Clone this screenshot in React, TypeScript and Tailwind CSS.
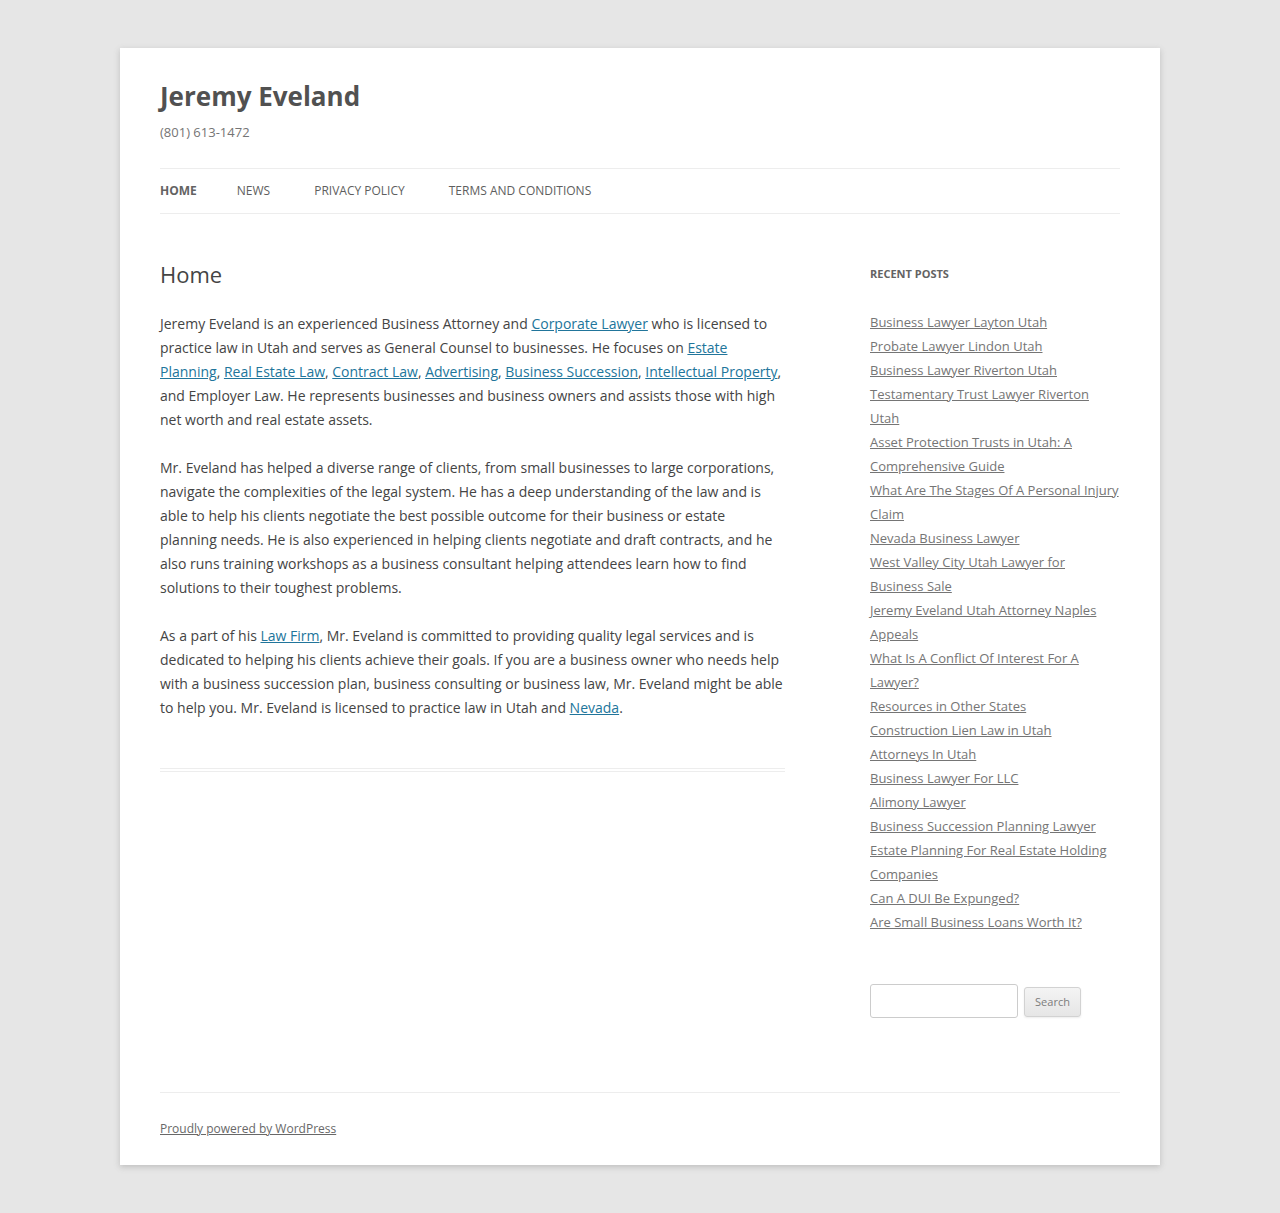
const navItems = [
  { label: "Home", current: true, gap: "mr-10" },
  { label: "News", gap: "mr-[44px]" },
  { label: "Privacy Policy", gap: "mr-[44px]" },
  { label: "Terms and Conditions", gap: "mr-10" },
];

const recentPosts = [
  "Business Lawyer Layton Utah",
  "Probate Lawyer Lindon Utah",
  "Business Lawyer Riverton Utah",
  "Testamentary Trust Lawyer Riverton Utah",
  "Asset Protection Trusts in Utah: A Comprehensive Guide",
  "What Are The Stages Of A Personal Injury Claim",
  "Nevada Business Lawyer",
  "West Valley City Utah Lawyer for Business Sale",
  "Jeremy Eveland Utah Attorney Naples Appeals",
  "What Is A Conflict Of Interest For A Lawyer?",
  "Resources in Other States",
  "Construction Lien Law in Utah",
  "Attorneys In Utah",
  "Business Lawyer For LLC",
  "Alimony Lawyer",
  "Business Succession Planning Lawyer",
  "Estate Planning For Real Estate Holding Companies",
  "Can A DUI Be Expunged?",
  "Are Small Business Loans Worth It?",
];

function A({ children }: { children: React.ReactNode }) {
  return (
    <a href="#" className="text-[#21759b] underline">
      {children}
    </a>
  );
}

export default function App() {
  return (
    <div className="min-h-[1213px] bg-[#e6e6e6] pt-12 pb-12 font-['Open_Sans',sans-serif] text-[#444]">
      <div className="mx-auto w-[1040px] bg-white px-10 shadow-[0_2px_6px_rgba(100,100,100,0.3)]">
        <header className="pt-6">
          <h1 className="text-[26px] font-bold leading-[48px] text-[#515151]">
            Jeremy Eveland
          </h1>
          <h2 className="text-[13px] leading-6 text-[#757575]">(801) 613-1472</h2>
          <nav className="mt-6 border-y border-[#ededed]">
            <ul className="flex">
              {navItems.map((item) => (
                <li key={item.label} className={`${item.gap} text-[12px] uppercase leading-[44px]`}>
                  <a
                    href="#"
                    className={
                      item.current ? "font-bold text-[#636363]" : "text-[#5e5e5e]"
                    }
                  >
                    {item.label}
                  </a>
                </li>
              ))}
            </ul>
          </nav>
        </header>

        <div className="flex items-start justify-between pt-12">
          <main className="w-[625px]">
            <article className="border-b-4 border-double border-[#ededed] pb-6">
              <h1 className="mb-[26px] text-[22px] leading-6">Home</h1>
              <div className="text-[14px] leading-6">
                <p className="mb-6">
                  Jeremy Eveland is an experienced Business Attorney and{" "}
                  <A>Corporate Lawyer</A> who is licensed to practice law in Utah and
                  serves as General Counsel to businesses. He focuses on{" "}
                  <A>Estate Planning</A>, <A>Real Estate Law</A>, <A>Contract Law</A>,{" "}
                  <A>Advertising</A>, <A>Business Succession</A>,{" "}
                  <A>Intellectual Property</A>, and Employer Law. He represents
                  businesses and business owners and assists those with high net worth
                  and real estate assets.
                </p>
                <p className="mb-6">
                  Mr. Eveland has helped a diverse range of clients, from small
                  businesses to large corporations, navigate the complexities of the
                  legal system. He has a deep understanding of the law and is able to
                  help his clients negotiate the best possible outcome for their
                  business or estate planning needs. He is also experienced in helping
                  clients negotiate and draft contracts, and he also runs training
                  workshops as a business consultant helping attendees learn how to
                  find solutions to their toughest problems.
                </p>
                <p className="mb-6">
                  As a part of his <A>Law Firm</A>, Mr. Eveland is committed to
                  providing quality legal services and is dedicated to helping his
                  clients achieve their goals. If you are a business owner who needs
                  help with a business succession plan, business consulting or business
                  law, Mr. Eveland might be able to help you. Mr. Eveland is licensed to
                  practice law in Utah and <A>Nevada</A>.
                </p>
              </div>
            </article>
          </main>

          <aside className="w-[250px] pb-[74px]">
            <section className="mb-[50px]">
              <h3 className="mb-6 text-[11px] font-bold uppercase leading-6 text-[#636363]">
                Recent Posts
              </h3>
              <ul className="text-[13px] leading-6">
                {recentPosts.map((title) => (
                  <li key={title}>
                    <a href="#" className="text-[#757575] underline">
                      {title}
                    </a>
                  </li>
                ))}
              </ul>
            </section>
            <form className="flex items-center gap-[6px]">
              <input
                type="text"
                className="h-[34px] w-[148px] rounded-[3px] border border-[#ccc] px-[6px] text-[13px]"
              />
              <button
                type="button"
                className="mt-[2px] h-[30px] w-[57px] rounded-[3px] border border-[#d2d2d2] bg-gradient-to-b from-[#f4f4f4] to-[#e6e6e6] text-[11px] text-[#7c7c7c] shadow-[0_1px_2px_rgba(64,64,64,0.1)]"
              >
                Search
              </button>
            </form>
          </aside>
        </div>

        <footer className="border-t border-[#ededed] py-6 text-[12px] leading-6 text-[#757575]">
          <a href="#" className="text-[#686868] underline">
            Proudly powered by WordPress
          </a>
        </footer>
      </div>
    </div>
  );
}
